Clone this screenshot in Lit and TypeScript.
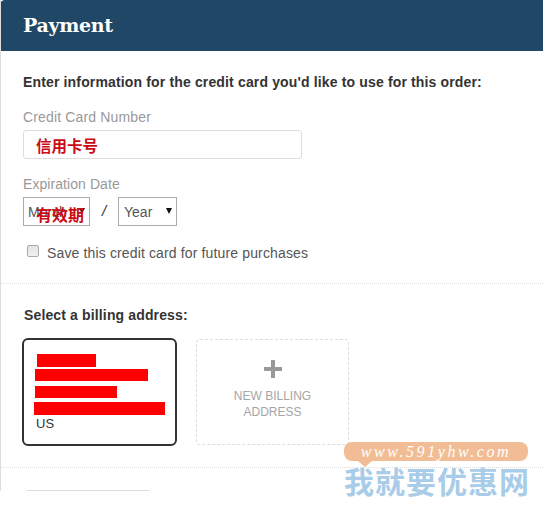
import { LitElement, html, css } from "lit";
import { customElement } from "lit/decorators.js";

@customElement("app-root")
export class AppRoot extends LitElement {
  static styles = css`
    :host { display: block; position: relative; width: 543px; height: 505px; background: #fff; font-family: "Liberation Sans", Arial, sans-serif; overflow: hidden; }
    .panel { height: 491px; overflow: hidden; box-sizing: border-box; border-left: 1px solid #ddd; }
    .head { height: 51px; margin-left: -1px; background: #204766; border-top-left-radius: 5px; color: #fff; box-sizing: border-box; padding: 13px 0 0 23px; font: bold 19px/24px "DejaVu Serif", "Liberation Serif", serif; letter-spacing: -0.3px; }
    .sec { padding: 0 0 0 22px; border-bottom: 1px dotted #ddd; }
    .pay { height: 233px; box-sizing: border-box; padding-top: 23px; }
    .lead { font-size: 14px; line-height: 16px; font-weight: bold; color: #333; letter-spacing: 0.15px; }
    .lbl { font-size: 14px; line-height: 16px; color: #999; margin-top: 19px; letter-spacing: 0.15px; }
    .lbl.second { margin-top: 17px; letter-spacing: 0.07px; }
    .input { position: relative; width: 279px; height: 29px; margin-top: 5px; box-sizing: border-box; border: 1px solid #ddd; border-radius: 3px; background: #fff; }
    .cn { position: absolute; color: #cc0a14; font: bold 15.5px/18px "Noto Sans CJK SC", sans-serif; white-space: nowrap; letter-spacing: 0; }
    .cn.card { left: 12px; top: 5px; }
    .dates { display: flex; align-items: center; margin-top: 5px; height: 29px; }
    .sel { position: relative; display: flex; align-items: center; justify-content: space-between; box-sizing: border-box; height: 29px; border: 1px solid #aaa; padding: 0 4px 0 5px; font-size: 14px; color: #555; background: #fff; }
    .sel.month { width: 67px; padding-left: 4px; }
    .sel.year { width: 59px; }
    .tri { width: 0; height: 0; border-left: 3.5px solid transparent; border-right: 3.5px solid transparent; border-top: 6px solid #111; margin-bottom: 2px; }
    .cn.exp { left: 12px; top: 7px; font-size: 16px; }
    .slash { width: 28px; text-align: center; font-size: 15px; font-style: italic; color: #333; margin-bottom: 3px; }
    .save { display: flex; align-items: center; margin-top: 17px; padding-left: 4px; font-size: 14px; line-height: 20px; color: #555; letter-spacing: 0.14px; }
    .save input { appearance: none; margin: 0 8px 4px 0; width: 12px; height: 12px; box-sizing: border-box; border: 1px solid #aaa; border-radius: 2px; background: linear-gradient(#e2e2e2, #f2f2f2); }
    .bill { height: 184px; box-sizing: border-box; padding-top: 23px; }
    .bill h3 { margin: 0 0 0 1px; font-size: 14px; line-height: 16px; font-weight: bold; color: #333; letter-spacing: 0.14px; }
    .cards { display: flex; align-items: center; gap: 19px; margin: 15px 0 0 -1px; }
    .addr { width: 155px; height: 108px; box-sizing: border-box; border: 2px solid #333; border-radius: 6px; padding: 14px 0 0 10px; font-size: 13px; line-height: 16px; color: #333; }
    .bar { background: #f00; height: 13px; }
    .us { margin: 1px 0 0 2px; }
    .new { width: 153px; height: 106px; box-sizing: border-box; border: 1px dashed #ddd; border-radius: 4px; display: flex; flex-direction: column; align-items: center; color: #a5a5a5; font-size: 12px; line-height: 16px; text-align: center; padding-top: 20px; }
    .plus { width: 18px; height: 18px; margin-bottom: 10px; }
    .next { width: 126px; margin: 22px 0 0 24px; height: 20px; border: 1px solid #ddd; border-radius: 3px; box-sizing: border-box; }
    .wm { position: absolute; left: 344px; top: 442px; width: 184px; }
    .pill { height: 19px; border-radius: 8px; background: #f2bd94; color: #fff; font: italic 16px/19px "Liberation Serif", serif; letter-spacing: 2.6px; text-align: center; white-space: nowrap; }
    .tail { position: absolute; left: 14px; top: 19px; width: 0; height: 0; border-left: 7px solid transparent; border-right: 7px solid transparent; border-top: 6px solid #f2bd94; }
    .brand { margin-top: 3px; color: #a9cce8; font: bold 30px/33px "Noto Sans CJK SC", sans-serif; letter-spacing: 1px; white-space: nowrap; }
  `;

  render() {
    return html`
      <div class="panel">
        <div class="head">Payment</div>
        <div class="sec pay">
          <div class="lead">Enter information for the credit card you'd like to use for this order:</div>
          <div class="lbl">Credit Card Number</div>
          <div class="input"><span class="cn card">信用卡号</span></div>
          <div class="lbl second">Expiration Date</div>
          <div class="dates">
            <div class="sel month">Month<span class="tri"></span><span class="cn exp">有效期</span></div>
            <div class="slash">/</div>
            <div class="sel year">Year<span class="tri"></span></div>
          </div>
          <label class="save"><input type="checkbox" />Save this credit card for future purchases</label>
        </div>
        <div class="sec bill">
          <h3>Select a billing address:</h3>
          <div class="cards">
            <div class="addr">
              <div class="bar" style="width:59px;margin-left:3px"></div>
              <div class="bar" style="width:113px;margin:2px 0 0 1px;height:12px"></div>
              <div class="bar" style="width:82px;margin:5px 0 0 1px;height:12px"></div>
              <div class="bar" style="width:131px;margin-top:4px"></div>
              <div class="us">US</div>
            </div>
            <div class="new">
              <svg class="plus" viewBox="0 0 18 18"><path d="M7 0h4v7h7v4h-7v7H7v-7H0V7h7z" fill="#999"/></svg>
              <div>NEW BILLING<br />ADDRESS</div>
            </div>
          </div>
        </div>
        <div class="next"></div>
      </div>
      <div class="wm">
        <div class="pill">www.591yhw.com</div>
        <div class="tail"></div>
        <div class="brand">我就要优惠网</div>
      </div>
    `;
  }
}
